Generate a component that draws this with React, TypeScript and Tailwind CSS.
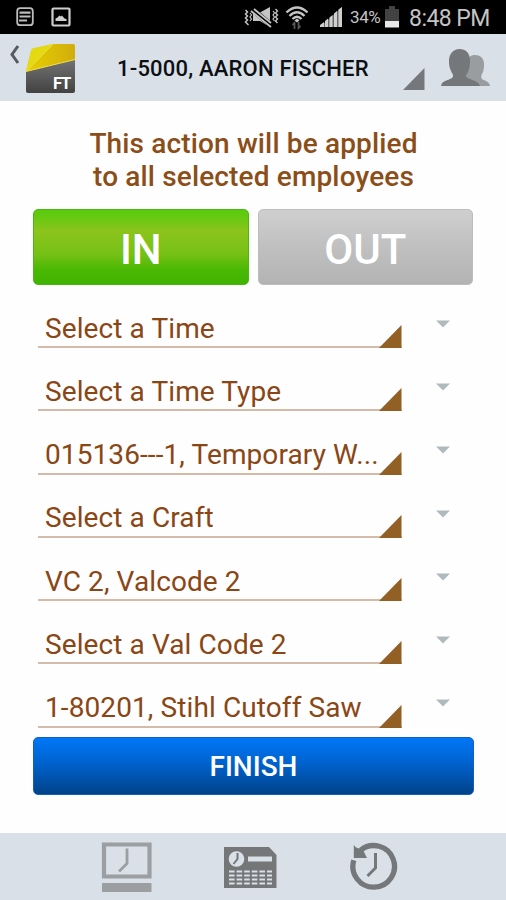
const fields = [
  'Select a Time',
  'Select a Time Type',
  '015136---1, Temporary W...',
  'Select a Craft',
  'VC 2, Valcode 2',
  'Select a Val Code 2',
  '1-80201, Stihl Cutoff Saw',
];

function StatusBar() {
  return (
    <div className="flex h-[34px] shrink-0 items-center bg-black text-[#c4c4c4]">
      <svg className="ml-4 h-5 w-[18px] shrink-0" viewBox="0 0 18 20" fill="none" stroke="#bdbdbd">
        <rect x="1.2" y="1.2" width="15.6" height="17" rx="3" strokeWidth="1.8" />
        <path d="M3.500 5.700h11M3.500 9.500h11M3 13.500h8" strokeWidth="2.200" />
      </svg>
      <svg className="ml-[17px] h-5 w-5 shrink-0" viewBox="0 0 20 20">
        <rect x="1.5" y="1.5" width="17" height="17" rx="1" fill="none" stroke="#cfcfcf" strokeWidth="2.200" />
        <path d="M4.500 14V11.500l2-1 2-2 1.500 1 1-1 2.500 3 2 .5v2z" fill="#cfcfcf" />
      </svg>
      <svg className="ml-[172px] h-6 w-[36px] shrink-0" viewBox="0 0 36 24" fill="none" stroke="#c4c4c4">
        <path d="M2.500 5l2 2-2 2 2 2-2 2 2 2-2 2 2 2 1 1" strokeWidth="1.500" />
        <path d="M7 8l1.500 2-1.500 2 1.500 2L7 16" strokeWidth="1.200" />
        <path d="M10 8h6l11-6v20l-10-6h-7z" fill="#c4c4c4" stroke="none" />
        <path d="M9 4l20 17" stroke="#000" strokeWidth="5.500" />
        <path d="M8 6l20 16M11 4l17 14" strokeWidth="1.800" />
        <path d="M30 6l1.500 2-1.500 2 1.500 2-1.500 2 1.500 2" strokeWidth="1.200" />
        <path d="M32.500 4l2 2-2 2 2 2-2 2 2 2-2 2 2 2" strokeWidth="1.400" />
      </svg>
      <svg className="ml-1.5 h-[26px] w-6 shrink-0" viewBox="0 0 24 26" fill="none" stroke="#c4c4c4">
        <path d="M1.500 8.500Q12-1.500 22.500 8.500M4.500 12Q12 4.500 19.500 12M7.500 15Q12 10.500 16.500 15" strokeWidth="2.400" />
        <path d="M9.500 16.500L12 14.500l2.500 2-2.500 2z" fill="#c4c4c4" stroke="none" />
        <path d="M9.500 25v-6l-2 2M13.500 18v6l2-2" stroke="#555" strokeWidth="1.800" />
      </svg>
      <svg className="ml-2.5 h-[22px] w-6 shrink-0" viewBox="0 0 24 22" fill="#cfcfcf">
        <path d="M1 21v-2l4-3v5zM6 21v-6l3-2.500v8.500zM10.500 21V11.500L13.500 9v12zM15 21V7.500L18 5v16zM19.500 21V3.500L23 1v20z" />
        <path d="M1 21L23 1v20z" opacity=".5" />
      </svg>
      <span className="ml-[7px] w-[31px] whitespace-nowrap pt-0.5 text-[17px] tracking-[-0.4px]">34%</span>
      <svg className="ml-[4px] h-[22px] w-[14px] shrink-0" viewBox="0 0 14 22">
        <path d="M0 3h4V0h6v3h4v12H0z" fill="#424242" />
        <path d="M0 15h14v6.500H0z" fill="#e8e8e8" />
      </svg>
      <span className="ml-[10px] whitespace-nowrap pt-[3px] text-[23px] leading-none tracking-[-0.55px]">8:48 PM</span>
    </div>
  );
}

function AppLogo() {
  return (
    <svg className="mt-[9px] h-[50px] w-[50px] shrink-0" viewBox="0 0 50 50">
      <defs>
        <linearGradient id="slate" x1="0" y1="0" x2="0" y2="1">
          <stop offset="0" stopColor="#777" />
          <stop offset="1" stopColor="#424242" />
        </linearGradient>
        <linearGradient id="gold" x1="0" y1="0" x2="1" y2="0">
          <stop offset="0" stopColor="#e6d000" />
          <stop offset="1" stopColor="#d2ad0c" />
        </linearGradient>
      </defs>
      <path d="M1 27L50 14v34q0 2-2 2H3q-2 0-2-2z" fill="url(#slate)" />
      <path d="M6 8q1-3 4-3L28 1h20q2 0 2 2v13.500L1 28.500z" fill="url(#gold)" />
      <path d="M6 8q1-3 4-3L28 1 1 28.500z" fill="#e4da12" />
      <path d="M28 1L1 28.500l49-12" fill="none" stroke="#efe04a" strokeWidth="1" />
      <text x="28" y="46" fill="#fff" fontFamily="Roboto, sans-serif" fontSize="16.500" fontWeight="700" letterSpacing="-1.200">FT</text>
    </svg>
  );
}

function Header() {
  return (
    <header className="flex h-[67px] shrink-0 bg-[#dae0e7]">
      <svg className="ml-[9px] mt-[11px] h-[19px] w-[11px] shrink-0" viewBox="0 0 11 19">
        <path d="M9 1L3 9.500 9 18" fill="none" stroke="#555b60" strokeWidth="3" />
      </svg>
      <div className="ml-[5px]"><AppLogo /></div>
      <h1 className="ml-[42px] mt-[20px] w-[252px] whitespace-nowrap text-[22px] font-medium leading-[30px] tracking-[0.200px] text-[#0c0f14]">
        1-5000, AARON FISCHER
      </h1>
      <svg className="ml-[33px] mt-[34px] h-[22px] w-[23px] shrink-0" viewBox="0 0 23 22">
        <path d="M1 22L22.500 0v22z" fill="#74787c" />
      </svg>
      <svg className="ml-4 mt-[15px] h-[38px] w-[49px] shrink-0" viewBox="0 0 49 38">
        <path d="M26 37V12c1-4 4-6 8-6 5 0 9 3 9 9 0 3 0 7-2 10-1 2-1 4 0 5 3 2 7 2 8 7z" fill="#999da0" />
        <path d="M0 37c1-5 5-5 9-7 3-1 4-3 2-6-2-4-3-6-3-12C8 5 12 0 18.500 0S29 4 29 12c0 6-1 9-3 13-1 3 0 4 3 5 5 2 9 3 10 7z" fill="#75787a" />
      </svg>
    </header>
  );
}

function Field({ label }: { label: string }) {
  return (
    <div className="flex h-[63.300px]">
      <div className="flex w-[364px] items-end border-b-2 border-[#d6bca8]">
        <span className="ml-[7px] w-[333px] shrink-0 whitespace-nowrap pb-[1.500px] text-[28px] leading-[33px] tracking-[0.100px] text-[#8a4614]">{label}</span>
        <svg className="-mb-[2px] h-[24px] w-[24px] shrink-0" viewBox="0 0 24 24">
          <path d="M1 24L23.500 1v23z" fill="#925f25" />
        </svg>
      </div>
      <svg className="ml-[34px] mt-[35px] h-2 w-[14px]" viewBox="0 0 14 8">
        <path d="M0 .5h14l-7 7z" fill="#b0babc" />
      </svg>
    </div>
  );
}

function BottomNav() {
  return (
    <nav className="flex h-[67px] shrink-0 items-start bg-[#dae0e7]">
      <svg className="ml-[101px] mt-[9px] h-[50px] w-[51px] shrink-0" viewBox="0 0 51 50">
        <path d="M3 2.500h45.500v32H3z" fill="none" stroke="#9b9fa2" strokeWidth="4.200" />
        <path d="M1 41h49.500v9H1z" fill="#9b9fa2" />
        <path d="M26 6.500v15l-8 8" fill="none" stroke="#9b9fa2" strokeWidth="2.800" />
      </svg>
      <svg className="ml-[71px] mt-[13px] h-[42px] w-[54px] shrink-0" viewBox="0 0 54 42">
        <path d="M1 1h45l7.500 8v33H1z" fill="#747678" />
        <circle cx="13.500" cy="13" r="7.800" fill="#dae0e7" />
        <path d="M14.500 7v6l-4 5" fill="none" stroke="#747678" strokeWidth="2" />
        <path d="M25 10.500h24v5H25z" fill="#dae0e7" />
        <path d="M6 25.500h43M6 29.500h43M6 33.500h43M6 37.500h43" stroke="#dae0e7" strokeWidth="2.200" strokeDasharray="5.600 2" />
      </svg>
      <svg className="ml-[72px] mt-[9px] h-[50px] w-[50px] shrink-0" viewBox="0 0 50 50" fill="none" stroke="#74787b">
        <path d="M4.300 19A20.800 20.800 0 1 0 11 9" strokeWidth="5.300" transform="translate(.5 -.7)" />
        <path d="M4.800 3L7 5.500 14 8l4 8H4.800z" fill="#74787b" stroke="none" />
        <path d="M26.500 11v15l-8 8" strokeWidth="3" />
      </svg>
    </nav>
  );
}

export default function App() {
  return (
    <div className="flex h-[900px] w-[506px] flex-col overflow-hidden bg-[#fefefe] font-['Roboto',sans-serif]">
      <StatusBar />
      <Header />
      <main className="flex-1 px-[33px]">
        <h2 className="whitespace-nowrap pl-px pt-[26px] text-center text-[28px] font-medium leading-[33px] tracking-[0.150px] text-[#8c4e18]">
          This action will be applied
          <br />
          to all selected employees
        </h2>
        <div className="mt-4 flex gap-[9px]">
          <button className="h-[76px] w-[216px] rounded-[5px] border border-[#49b814] bg-[linear-gradient(#5bcb0c_0%,#66c911_10%,#8cc41c_28%,#76c116_60%,#4ab804_80%,#40b300_100%)] pt-1.5 text-[42px] font-medium leading-none text-white">
            IN
          </button>
          <button className="h-[76px] w-[216px] rounded-[5px] border border-[#bdbdbd] bg-[linear-gradient(#cfcfcf,#c0c0c0_50%,#b3b3b3)] pt-1.5 text-[42px] font-medium leading-none text-white">
            OUT
          </button>
        </div>
        <div className="-mt-[0.300px] ml-[5px]">
          {fields.map((label) => (
            <Field key={label} label={label} />
          ))}
        </div>
        <button className="mt-[9px] block h-[58px] w-[441px] rounded-[5px] border border-[#1260bd] bg-[linear-gradient(#0077f7,#0062ce_45%,#004389)] pt-[3px] text-[28px] font-medium leading-none text-white">
          FINISH
        </button>
      </main>
      <BottomNav />
    </div>
  );
}
